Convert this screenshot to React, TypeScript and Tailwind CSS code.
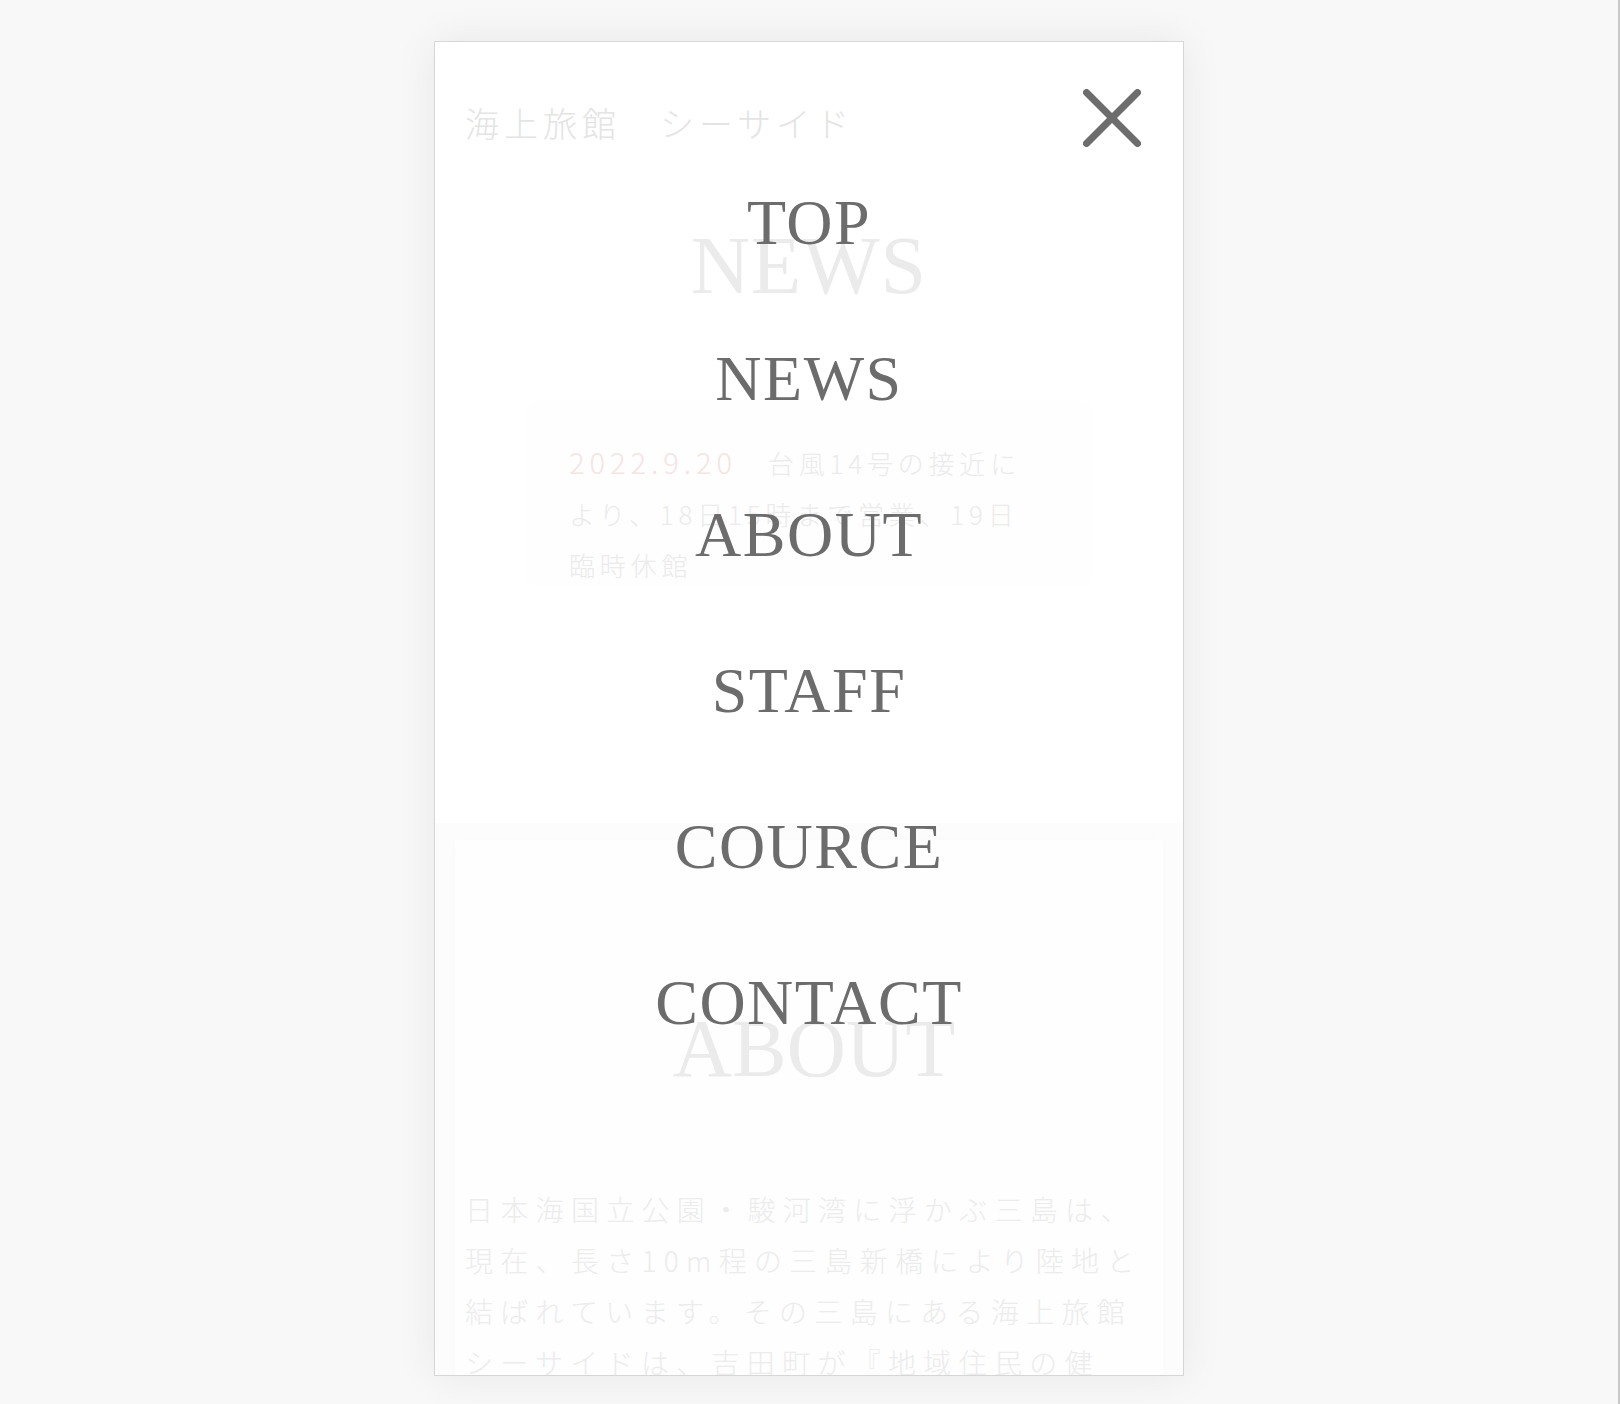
import React from "react";

const serif = { fontFamily: '"Liberation Serif", "Times New Roman", serif' };
const jp = { fontFamily: '"Noto Sans CJK JP", "Noto Sans", sans-serif' };

const menu = ["TOP", "NEWS", "ABOUT", "STAFF", "COURCE", "CONTACT"];

export default function App() {
  return (
    <div className="flex h-[1404px] w-[1620px] overflow-hidden bg-[#f8f8f8]">
      <div className="flex flex-1 justify-center pt-[41px]">
        <div className="relative h-[1335px] w-[750px] shrink-0 overflow-hidden border border-[#d6d6d6] bg-white shadow-[0_0_40px_rgba(0,0,0,0.07)]">
          {/* background page (faded under the menu) */}
          <div className="flex h-[160px] items-center px-[30px]">
            <span className="text-[34px] font-light tracking-[5px] text-[#e4e4e4]" style={jp}>
              海上旅館　シーサイド
            </span>
          </div>
          <h2
            className="mt-[23px] text-center text-[82px] leading-[82px] tracking-[1px] text-[#ebebeb]"
            style={serif}
          >
            NEWS
          </h2>
          <div className="mx-auto mt-[98px] h-[177px] w-[560px] bg-[#fefefe] pl-[40px] pt-[31px] shadow-[0_0_12px_rgba(0,0,0,0.015)]">
            <div className="whitespace-nowrap text-[26px] font-light leading-[51px] tracking-[4.8px] text-[#ebebeb]" style={jp}>
              <div>
                <span className="text-[29px] tracking-[5px] text-[#f4e4e4]">2022.9.20</span>
                {"　台風14号の接近に"}
              </div>
              <div>より、18日15時まで営業、19日</div>
              <div>臨時休館</div>
            </div>
          </div>
          <div className="mt-[241px] h-[600px] bg-[#fdfcfc] px-[20px] pt-[17px]">
            <div className="h-full bg-[#fefefe] pl-[10px] pt-[168px] shadow-[0_0_18px_rgba(0,0,0,0.012)]">
              <h2
                className="text-center text-[82px] leading-[82px] text-[#ebebeb]"
                style={serif}
              >
                ABOUT
              </h2>
              <div
                className="mt-[94px] whitespace-nowrap text-[28px] font-light leading-[51px] tracking-[7.3px] text-[#ececec]"
                style={jp}
              >
                <div>日本海国立公園・駿河湾に浮かぶ三島は、</div>
                <div>現在、長さ10m程の三島新橋により陸地と</div>
                <div>結ばれています。その三島にある海上旅館</div>
                <div>シーサイドは、吉田町が『地域住民の健</div>
              </div>
            </div>
          </div>

          {/* menu overlay */}
          <div className="absolute inset-0">
            <button className="absolute right-[42px] top-[47px] h-[58px] w-[58px]" aria-label="close">
              <svg viewBox="0 0 58 58" width="58" height="58">
                <line x1="3.5" y1="3.5" x2="54.5" y2="54.5" stroke="#6d6d6d" strokeWidth="7" strokeLinecap="round" />
                <line x1="54.5" y1="3.5" x2="3.5" y2="54.5" stroke="#6d6d6d" strokeWidth="7" strokeLinecap="round" />
              </svg>
            </button>
            <nav className="flex flex-col items-center pt-[103px]">
              {menu.map((m) => (
                <a
                  key={m}
                  className="block h-[156px] text-[64px] leading-[156px] tracking-[1.5px] text-[#6c6c6c]"
                  style={serif}
                >
                  {m}
                </a>
              ))}
            </nav>
          </div>
        </div>
      </div>
      <div className="w-[2px] bg-[#c8c8c8]" />
    </div>
  );
}
